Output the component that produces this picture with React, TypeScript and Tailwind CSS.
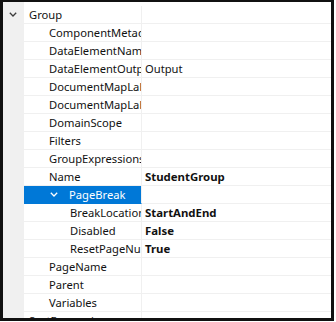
import React from "react";

interface Prop {
  name: string;
  value?: string;
  level: 0 | 1 | 2;
  expandable?: boolean;
  selected?: boolean;
  gutterChevron?: boolean;
  plainValue?: boolean;
}

const props: Prop[] = [
  { name: "Group", level: 0, gutterChevron: true },
  { name: "ComponentMetadata", level: 1 },
  { name: "DataElementName", level: 1 },
  { name: "DataElementOutput", value: "Output", level: 1, plainValue: true },
  { name: "DocumentMapLabel", level: 1 },
  { name: "DocumentMapLabelLocId", level: 1 },
  { name: "DomainScope", level: 1 },
  { name: "Filters", level: 1 },
  { name: "GroupExpressions", level: 1 },
  { name: "Name", value: "StudentGroup", level: 1 },
  { name: "PageBreak", level: 1, expandable: true, selected: true },
  { name: "BreakLocation", value: "StartAndEnd", level: 2 },
  { name: "Disabled", value: "False", level: 2 },
  { name: "ResetPageNumber", value: "True", level: 2 },
  { name: "PageName", level: 1 },
  { name: "Parent", level: 1 },
  { name: "Variables", level: 1 },
  { name: "SortExpressions", level: 0 },
];

function Chevron({ white }: { white?: boolean }) {
  return (
    <svg width="8" height="5" viewBox="0 0 8 5" className="shrink-0">
      <polyline
        points="0.8,0.8 4,4 7.2,0.8"
        fill="none"
        stroke={white ? "#ffffff" : "#3c3c3c"}
        strokeWidth={1.3}
      />
    </svg>
  );
}

const indent = ["pl-[5px]", "pl-[25px]", "pl-[46px]"];

export default function App() {
  return (
    <div className="w-[336px] h-[322px] bg-white">
      <div
        className="w-[334px] h-[321px] overflow-hidden border-t-2 border-l-[3px] border-r-[3px] border-b-[3px] border-[#111] bg-white text-[11.2px] text-[#111]"
        style={{ fontFamily: '"Noto Sans", "Segoe UI", sans-serif' }}
      >
        <div className="flex h-[4px]">
          <div className="w-[21px] bg-[#f0f0f0]" />
        </div>
        {props.map((p, i) => (
          <div key={i} className="flex h-[18px]">
            <div className="w-[21px] shrink-0 bg-[#f0f0f0] flex items-center pl-[6px] pb-[1px]">
              {p.gutterChevron && <Chevron />}
            </div>
            <div
              className={`w-[118px] shrink-0 flex items-center overflow-hidden whitespace-nowrap border-b border-r border-[#f0f0f0] leading-[17px] ${indent[p.level]} ${
                p.selected ? "bg-[#0078d7] text-white border-b-[#0078d7]" : ""
              }`}
            >
              {p.expandable && (
                <span className="w-[20px] shrink-0 flex items-center pl-[1px]">
                  <Chevron white={p.selected} />
                </span>
              )}
              <span>{p.name}</span>
            </div>
            <div
              className={`flex-1 flex items-center pl-[3px] border-b border-[#f0f0f0] leading-[17px] whitespace-nowrap ${
                p.plainValue ? "" : "font-bold text-[11.4px]"
              }`}
            >
              {p.value}
            </div>
          </div>
        ))}
      </div>
    </div>
  );
}
